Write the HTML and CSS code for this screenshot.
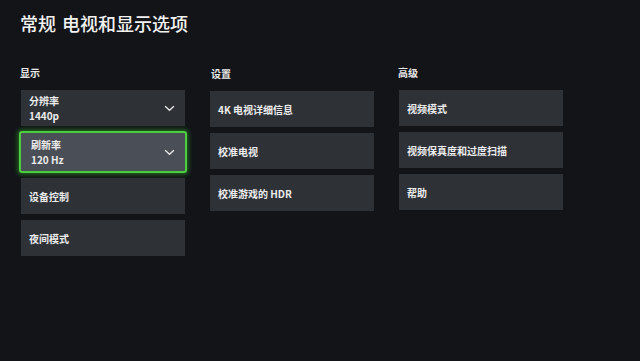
FILE: index.html
```html
<!DOCTYPE html>
<html lang="zh-CN">
<head>
<meta charset="utf-8">
<title>常规 电视和显示选项</title>
<link rel="stylesheet" href="styles.css">
</head>
<body>
<div class="screen">
  <h1 class="title">常规 电视和显示选项</h1>
  <div class="columns">
    <section class="col">
      <h2 class="label">显示</h2>
      <div class="card card-two">
        <div class="texts"><span>分辨率</span><span>1440p</span></div>
        <svg class="chev" viewBox="0 0 12 8" width="11" height="7"><path d="M1 1.5 L6 6 L11 1.5" fill="none" stroke="#e6e6e6" stroke-width="1.6"/></svg>
      </div>
      <div class="card card-two focus">
        <div class="texts"><span>刷新率</span><span>120 Hz</span></div>
        <svg class="chev" viewBox="0 0 12 8" width="11" height="7"><path d="M1 1.5 L6 6 L11 1.5" fill="none" stroke="#e6e6e6" stroke-width="1.6"/></svg>
      </div>
      <div class="card">设备控制</div>
      <div class="card">夜间模式</div>
    </section>
    <section class="col col-mid">
      <h2 class="label">设置</h2>
      <div class="card">4K 电视详细信息</div>
      <div class="card">校准电视</div>
      <div class="card">校准游戏的 HDR</div>
    </section>
    <section class="col">
      <h2 class="label">高级</h2>
      <div class="card">视频模式</div>
      <div class="card">视频保真度和过度扫描</div>
      <div class="card">帮助</div>
    </section>
  </div>
</div>
</body>
</html>
```
FILE: styles.css
```css
* { box-sizing: border-box; }
html, body { margin: 0; padding: 0; }
body {
  width: 640px;
  height: 361px;
  overflow: hidden;
  background: #121418;
  font-family: "Noto Sans CJK SC", "Noto Sans", sans-serif;
  color: #ececec;
}
.screen {
  padding: 10px 0 0 20px;
}
.title {
  margin: 0;
  font-size: 18px;
  font-weight: 500;
  line-height: 26px;
  color: #f2f2f2;
  word-spacing: 2px;
}
.columns {
  display: grid;
  grid-template-columns: 164px 164px 164px;
  column-gap: 25px;
  margin-top: 30px;
  padding-left: 1px;
}
.col {
  display: flex;
  flex-direction: column;
  gap: 6px;
}
.col-mid {
  padding-top: 1px;
}
.label {
  margin: 0 0 4px -1px;
  font-size: 10px;
  font-weight: 700;
  line-height: 14px;
  color: #e8e8e8;
}
.col-mid .label { margin-left: 1px; }
.card {
  height: 36px;
  background: #2e3237;
  display: flex;
  align-items: center;
  padding: 0 8px;
  font-size: 10px;
  font-weight: 700;
  color: #ececec;
}
.card-two {
  justify-content: space-between;
}
.texts {
  display: flex;
  flex-direction: column;
  gap: 3px;
  line-height: 12px;
}
.chev { margin-right: 2px; }
.focus {
  height: 42px;
  margin: -1px -2px -1px -2px;
  padding-left: 10px;
  background: #4a4e56;
  border: 2px solid #4ccf3e;
  border-radius: 3px;
  box-shadow: 0 0 5px 1px rgba(60, 200, 50, 0.55);
}
```
